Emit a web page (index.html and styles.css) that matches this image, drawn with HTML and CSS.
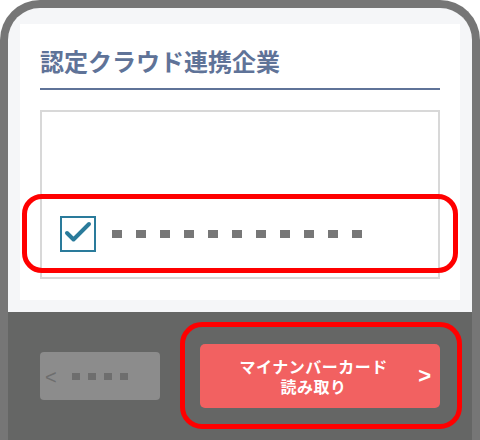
FILE: index.html
```html
<!DOCTYPE html>
<html lang="ja">
<head>
<meta charset="utf-8">
<link rel="stylesheet" href="styles.css">
</head>
<body>
<div class="phone">
  <div class="content">
    <div class="card">
      <h1 class="title">認定クラウド連携企業</h1>
      <div class="list">
        <div class="item">
          <span class="checkbox">
            <svg width="32" height="32" viewBox="0 0 32 32"><path d="M5 15 L11.5 21.5 L27 6" fill="none" stroke="#2a7b9b" stroke-width="4" stroke-linecap="round" stroke-linejoin="round"/></svg>
          </span>
          <span class="mask">
            <i></i><i></i><i></i><i></i><i></i><i></i><i></i><i></i><i></i><i></i><i></i>
          </span>
        </div>
      </div>
      <div class="highlight highlight-item"></div>
    </div>
  </div>
  <div class="footer">
    <button class="btn-back"><span class="lt">&lt;</span><span class="mask small"><i></i><i></i><i></i><i></i></span></button>
    <button class="btn-read"><span class="label"><span class="line">マイナンバーカード</span><span class="line">読み取り</span></span><span class="gt">&gt;</span></button>
    <div class="highlight highlight-btn"></div>
  </div>
</div>
</body>
</html>
```
FILE: styles.css
```css
* { box-sizing: border-box; }
html, body { margin: 0; padding: 0; background: #ffffff; }
body {
  width: 480px;
  height: 440px;
  overflow: hidden;
  font-family: "Noto Sans CJK JP", "Noto Sans", sans-serif;
}
.phone {
  width: 480px;
  height: 460px;
  border: 8px solid #767676;
  border-bottom: none;
  border-radius: 40px 40px 0 0;
  background: #f5f6f8;
  display: flex;
  flex-direction: column;
  position: relative;
}
.content {
  padding: 16px 12px 12px;
}
.card {
  background: #ffffff;
  height: 276px;
  padding: 0 20px;
  position: relative;
}
.title {
  margin: 0;
  padding-top: 19px;
  font-size: 24px;
  line-height: 36px;
  font-weight: 700;
  color: #5f7398;
  padding-bottom: 9px;
  border-bottom: 2px solid #5f7398;
  letter-spacing: 0;
}
.list {
  margin-top: 20px;
  height: 169px;
  border: 2px solid #d8d8d8;
  display: flex;
  flex-direction: column;
  justify-content: flex-end;
  padding: 0 18px 25px;
}
.item {
  display: flex;
  align-items: center;
  gap: 16px;
}
.checkbox {
  width: 36px;
  height: 36px;
  border: 2px solid #2a7b9b;
  display: flex;
  align-items: center;
  justify-content: center;
}
.checkbox svg { display: block; }
.mask {
  display: flex;
  gap: 14px;
}
.mask i {
  display: block;
  width: 10px;
  height: 8px;
  background: #777777;
}
.footer {
  flex: 1;
  background: #656665;
  display: flex;
  align-items: flex-start;
  justify-content: space-between;
  padding: 32px 32px 0;
  position: relative;
  margin: 0;
}
button {
  font-family: inherit;
  border: none;
  cursor: pointer;
}
.btn-back {
  margin-top: 8px;
  width: 120px;
  height: 48px;
  background: #8c8c8c;
  border-radius: 4px;
  display: flex;
  align-items: center;
  padding: 0 0 0 5px;
  gap: 15px;
}
.lt {
  color: #6e6e6e;
  font-size: 20px;
  font-weight: 400;
  line-height: 1;
  font-family: "Liberation Sans", sans-serif;
  margin-top: 1px;
}
.mask.small { gap: 8px; }
.mask.small i {
  width: 8px;
  height: 7px;
  background: #6e6e6e;
}
.btn-read {
  width: 240px;
  height: 64px;
  background: #f26161;
  border-radius: 5px;
  color: #ffffff;
  display: flex;
  align-items: center;
  padding: 0 9px 0 0;
}
.btn-read .label {
  flex: 1;
  display: flex;
  flex-direction: column;
  align-items: center;
  font-size: 16px;
  font-weight: 700;
  letter-spacing: 0.5px;
}
.btn-read .line {
  display: block;
  height: 20px;
  line-height: 20px;
}
.btn-read .gt {
  margin-left: -9px;
  font-size: 22px;
  font-weight: 700;
  line-height: 1;
  font-family: "Liberation Sans", sans-serif;
}
.highlight {
  position: absolute;
  border: 5px solid #ff0000;
  pointer-events: none;
}
.highlight-item {
  left: 2px;
  top: 170px;
  width: 436px;
  height: 79px;
  border-radius: 20px;
}
.highlight-btn {
  left: 172px;
  top: 10px;
  width: 282px;
  height: 107px;
  border-radius: 22px;
}
```
